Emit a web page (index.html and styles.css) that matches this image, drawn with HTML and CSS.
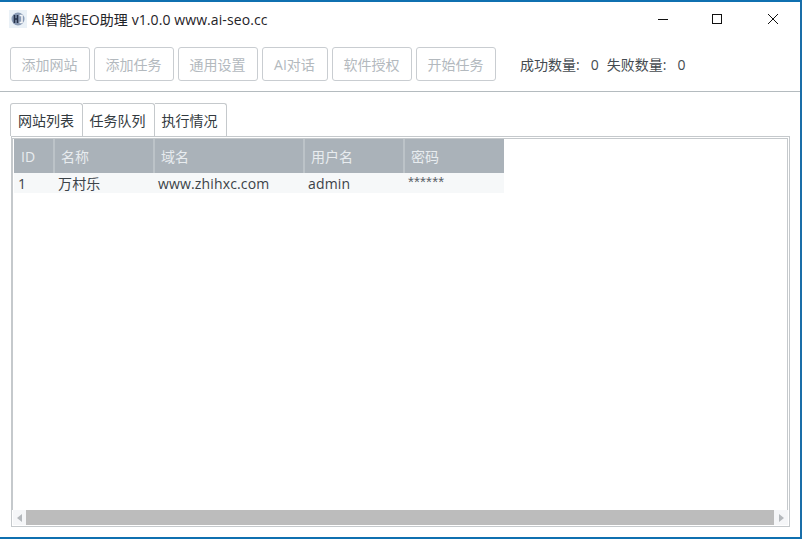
FILE: index.html
```html
<!DOCTYPE html>
<html lang="zh">
<head>
<meta charset="utf-8">
<title>AI智能SEO助理</title>
<link rel="stylesheet" href="styles.css">
</head>
<body>
<div class="window">
  <header class="titlebar">
    <svg class="app-icon" width="18" height="18" viewBox="0 0 18 18"><rect width="18" height="18" fill="#eaf1f7"/><circle cx="9" cy="9" r="6.5" fill="#8a9bb5"/><path d="M5.5 5v8M5.5 9h3M8.5 5v8" stroke="#26324a" stroke-width="1.6" fill="none"/><path d="M10.5 5.5h2.5v7h-2.5" stroke="#f4f6f8" stroke-width="1.6" fill="none"/></svg>
    <span class="title">AI智能SEO助理 v1.0.0 www.ai-seo.cc</span>
    <div class="win-controls">
      <svg class="win-min" width="12" height="12" viewBox="0 0 12 12"><path d="M1 6.5h10" stroke="#111" fill="none"/></svg>
      <svg width="12" height="12" viewBox="0 0 12 12"><rect x="1.5" y="1.5" width="9" height="9" stroke="#111" fill="none"/></svg>
      <svg width="12" height="12" viewBox="0 0 12 12"><path d="M1 1l10 10M11 1L1 11" stroke="#111" fill="none"/></svg>
    </div>
  </header>
  <div class="toolbar">
    <button class="btn">添加网站</button>
    <button class="btn">添加任务</button>
    <button class="btn">通用设置</button>
    <button class="btn btn-short">AI对话</button>
    <button class="btn">软件授权</button>
    <button class="btn">开始任务</button>
    <div class="stats"><span>成功数量:</span><span class="num">0</span><span class="second">失败数量:</span><span class="num num-last">0</span></div>
  </div>
  <div class="content">
    <nav class="tabs">
      <div class="tab active">网站列表</div>
      <div class="tab">任务队列</div>
      <div class="tab">执行情况</div>
    </nav>
    <div class="panel">
      <div class="table-area">
        <table class="grid">
          <thead><tr><th class="c1">ID</th><th class="c2">名称</th><th class="c3">域名</th><th class="c4">用户名</th><th class="c5">密码</th></tr></thead>
          <tbody><tr><td>1</td><td>万村乐</td><td>www.zhihxc.com</td><td>admin</td><td class="pw">******</td></tr></tbody>
        </table>
      </div>
      <div class="hscroll">
        <div class="arrow"><svg width="6" height="8" viewBox="0 0 6 8"><path d="M5 0v8L0 4z" fill="#b4b8bc"/></svg></div>
        <div class="thumb"></div>
        <div class="arrow arrow-end"><svg width="6" height="8" viewBox="0 0 6 8"><path d="M1 0v8l5-4z" fill="#b4b8bc"/></svg></div>
      </div>
    </div>
  </div>
</div>
</body>
</html>
```
FILE: styles.css
```css
* { box-sizing: border-box; }
html, body { margin: 0; padding: 0; height: 100%; }
body { font-family: "Open Sans", "Noto Sans CJK SC", sans-serif; background: #fff; color: #2c3338; font-size: 14px; overflow: hidden; }
.window { height: 539px; display: flex; flex-direction: column; border-top: 2px solid #0f70b0; border-right: 2px solid #1a6ea8; border-bottom: 2px solid #0f70b0; }
.titlebar { height: 34px; flex: none; display: flex; align-items: center; padding-left: 9px; }
.app-icon { flex: none; }
.title { margin-left: 5px; font-size: 14px; color: #1f2328; white-space: nowrap; letter-spacing: 0.09px; }
.win-controls { margin-left: auto; display: flex; gap: 44px; padding-right: 21px; }
.win-min { margin-right: -2px; }
.toolbar { height: 56px; flex: none; display: flex; align-items: flex-start; padding: 11px 0 0 10px; gap: 4px; border-bottom: 1px solid #b4bbbf; }
.btn { width: 80px; height: 34px; padding: 0 1px 0 0; background: #fff; border: 1px solid #c9cdd1; border-radius: 3px; color: #b3b9be; font: inherit; }
.btn-short { width: 66px; }
.stats { display: flex; margin-left: 20px; height: 34px; align-items: center; font-size: 14px; color: #444b50; }
.num { margin-left: 11px; }
.second { margin-left: 8px; }
.content { flex: 1; min-height: 0; display: flex; flex-direction: column; padding: 11px 10px 10px 10px; }
.tabs { display: flex; height: 33px; flex: none; }
.tab { width: 72px; height: 33px; padding-right: 2px; border: 1px solid #c5c9cc; border-left: 0; border-bottom: 0; border-radius: 0 3px 0 0; display: flex; align-items: center; justify-content: center; font-size: 14px; color: #333a40; }
.tab.active { width: 73px; padding-right: 1px; border-left: 1px solid #c5c9cc; border-radius: 3px 3px 0 0; }
.panel { flex: 1; min-height: 0; margin-left: 1px; border: 1px solid #c5c9cc; padding: 1px 1px 1px 0; display: flex; flex-direction: column; }
.table-area { flex: 1; min-height: 0; border: 1px solid #c5c9cc; border-bottom: 0; padding-left: 1px; }
.grid { border-collapse: collapse; table-layout: fixed; width: 490px; }
.grid th { height: 34px; background: #aab2b9; color: #e8ecef; font-weight: 400; text-align: left; padding: 0 0 0 6px; border-left: 2px solid #bcc3c8; font-size: 14px; }
.grid th.c1 { border-left: 0; padding-left: 7px; }
.c1 { width: 40px; }
.c2 { width: 100px; }
.c3 { width: 150px; }
.c4 { width: 100px; }
.c5 { width: 100px; }
.grid td { height: 20px; background: #f6f8f9; padding: 0 0 0 4px; color: #3c4348; font-size: 14px; letter-spacing: 0.15px; }
.grid td.pw { font-family: "Liberation Sans", sans-serif; font-size: 15px; letter-spacing: 0.2px; color: #5a6268; vertical-align: top; }
.hscroll { flex: none; height: 15px; display: flex; margin-left: 1px; }
.arrow { width: 13px; display: flex; align-items: center; justify-content: center; background: #f5f6f8; }
.arrow-end { width: 14px; }
.thumb { flex: 1; background: #bcbcbc; }
```
